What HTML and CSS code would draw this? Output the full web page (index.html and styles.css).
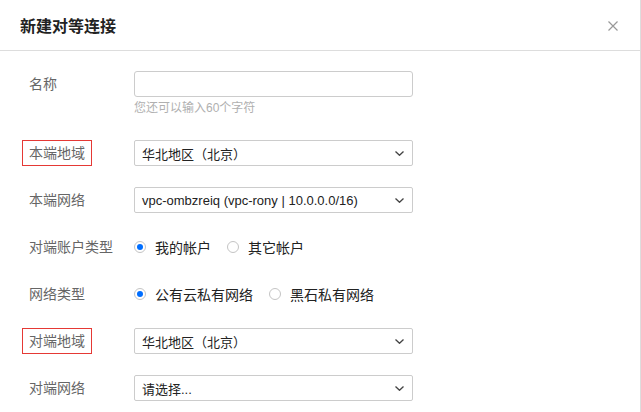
FILE: index.html
```html
<!DOCTYPE html>
<html lang="zh">
<head>
    <meta charset="UTF-8">
    <title>新建对等连接</title>
    <link rel="stylesheet" href="styles.css">
</head>
<body>
    <div class="dialog">
        <!-- 标题栏 -->
        <div class="dialog-head">
            <h3 class="dialog-title">新建对等连接</h3>
            <span class="dialog-close">
                <svg width="10" height="10" viewBox="0 0 10 10"><path d="M0.5 0.5L9.5 9.5M9.5 0.5L0.5 9.5" stroke="#999" stroke-width="1.2" fill="none"/></svg>
            </span>
        </div>

        <!-- 表单 -->
        <div class="dialog-body">
            <div class="form-row form-row-name">
                <div class="form-label"><span class="label-text">名称</span></div>
                <div class="form-field">
                    <input type="text" class="input-box">
                    <div class="form-hint">您还可以输入60个字符</div>
                </div>
            </div>

            <div class="form-row">
                <div class="form-label"><span class="label-text mark">本端地域</span></div>
                <div class="form-field">
                    <div class="select-box">
                        <span class="select-text">华北地区（北京）</span>
                        <svg class="select-arrow" width="9" height="5" viewBox="0 0 9 5"><path d="M0.5 0.5L4.5 4.3L8.5 0.5" stroke="#444" stroke-width="1.3" fill="none"/></svg>
                    </div>
                </div>
            </div>

            <div class="form-row">
                <div class="form-label"><span class="label-text">本端网络</span></div>
                <div class="form-field">
                    <div class="select-box">
                        <span class="select-text">vpc-ombzreiq (vpc-rony | 10.0.0.0/16)</span>
                        <svg class="select-arrow" width="9" height="5" viewBox="0 0 9 5"><path d="M0.5 0.5L4.5 4.3L8.5 0.5" stroke="#444" stroke-width="1.3" fill="none"/></svg>
                    </div>
                </div>
            </div>

            <div class="form-row">
                <div class="form-label"><span class="label-text">对端账户类型</span></div>
                <div class="form-field radio-group">
                    <label class="radio checked"><i class="radio-dot"></i>我的帐户</label>
                    <label class="radio"><i class="radio-dot"></i>其它帐户</label>
                </div>
            </div>

            <div class="form-row">
                <div class="form-label"><span class="label-text">网络类型</span></div>
                <div class="form-field radio-group">
                    <label class="radio checked"><i class="radio-dot"></i>公有云私有网络</label>
                    <label class="radio"><i class="radio-dot"></i>黑石私有网络</label>
                </div>
            </div>

            <div class="form-row">
                <div class="form-label"><span class="label-text mark">对端地域</span></div>
                <div class="form-field">
                    <div class="select-box">
                        <span class="select-text">华北地区（北京）</span>
                        <svg class="select-arrow" width="9" height="5" viewBox="0 0 9 5"><path d="M0.5 0.5L4.5 4.3L8.5 0.5" stroke="#444" stroke-width="1.3" fill="none"/></svg>
                    </div>
                </div>
            </div>

            <div class="form-row">
                <div class="form-label"><span class="label-text">对端网络</span></div>
                <div class="form-field">
                    <div class="select-box">
                        <span class="select-text">请选择...</span>
                        <svg class="select-arrow" width="9" height="5" viewBox="0 0 9 5"><path d="M0.5 0.5L4.5 4.3L8.5 0.5" stroke="#444" stroke-width="1.3" fill="none"/></svg>
                    </div>
                </div>
            </div>
        </div>
    </div>
</body>
</html>
```

FILE: styles.css
```css
/* 整体页面 */
body {
    margin: 0;
    background-color: #fff;
    font-family: "Liberation Sans", "Noto Sans CJK SC", sans-serif;
    font-size: 14px;
    color: #333;
}

.dialog {
    width: 641px;
    height: 412px;
    box-sizing: border-box;
    border-right: 1px solid #ddd;
    overflow: hidden;
}

/* 标题栏 */
.dialog-head {
    display: flex;
    align-items: center;
    justify-content: space-between;
    height: 50px;
    padding: 0 22px 0 20px;
    border-bottom: 1px solid #ddd;
}

.dialog-title {
    margin: 0;
    font-size: 16px;
    font-weight: bold;
    color: #222;
}

.dialog-close {
    display: flex;
    width: 10px;
    height: 10px;
    margin-top: 2px;
}

/* 表单 */
.dialog-body {
    padding: 20px 0 0 22px;
}

.form-row {
    display: flex;
    align-items: flex-start;
    margin-bottom: 21px;
}

.form-row-name {
    margin-bottom: 23px;
}

.form-label {
    width: 112px;
    flex-shrink: 0;
    height: 26px;
}

.label-text {
    display: inline-block;
    height: 24px;
    line-height: 24px;
    padding: 0 6px;
    border: 1px solid transparent;
    color: #666;
    white-space: nowrap;
}

.label-text.mark {
    border-color: #e53935;
}

.form-field {
    width: 279px;
}

.input-box {
    display: block;
    width: 100%;
    height: 26px;
    box-sizing: border-box;
    border: 1px solid #ccc;
    border-radius: 3px;
    outline: none;
}

.form-hint {
    margin-top: 2px;
    line-height: 18px;
    font-size: 12px;
    color: #b0b0b0;
}

/* 下拉框 */
.select-box {
    display: flex;
    align-items: center;
    justify-content: space-between;
    height: 26px;
    box-sizing: border-box;
    padding: 0 8px 0 7px;
    border: 1px solid #ccc;
    border-radius: 2px;
    font-size: 13px;
    color: #222;
}

.select-arrow {
    flex-shrink: 0;
}

/* 单选 */
.radio-group {
    display: flex;
    align-items: center;
    height: 26px;
    width: auto;
}

.radio {
    display: flex;
    align-items: center;
    margin-right: 16px;
    color: #222;
}

.radio-dot {
    display: flex;
    align-items: center;
    justify-content: center;
    width: 12px;
    height: 12px;
    box-sizing: border-box;
    margin-right: 9px;
    border: 1px solid #c4c4c4;
    border-radius: 50%;
}

.radio.checked .radio-dot::after {
    content: "";
    width: 6px;
    height: 6px;
    border-radius: 50%;
    background-color: #006eff;
}
```
